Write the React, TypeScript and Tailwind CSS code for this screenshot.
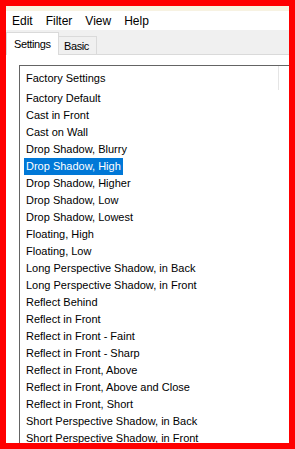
const items = [
  'Factory Default',
  'Cast in Front',
  'Cast on Wall',
  'Drop Shadow, Blurry',
  'Drop Shadow, High',
  'Drop Shadow, Higher',
  'Drop Shadow, Low',
  'Drop Shadow, Lowest',
  'Floating, High',
  'Floating, Low',
  'Long Perspective Shadow, in Back',
  'Long Perspective Shadow, in Front',
  'Reflect Behind',
  'Reflect in Front',
  'Reflect in Front - Faint',
  'Reflect in Front - Sharp',
  'Reflect in Front, Above',
  'Reflect in Front, Above and Close',
  'Reflect in Front, Short',
  'Short Perspective Shadow, in Back',
  'Short Perspective Shadow, in Front',
]

const selected = 'Drop Shadow, High'

export default function App() {
  return (
    <div className="w-[295px] h-[449px] bg-[#ff0000] p-[6px] font-['Liberation_Sans',Arial,sans-serif] text-black">
      <div className="w-full h-full bg-white flex flex-col overflow-hidden">
        <div className="h-[5px] bg-[#f7f2e2] shrink-0" />

        {/* menu bar */}
        <div className="h-[19px] shrink-0 flex items-center pl-[6px] gap-[13px] leading-none text-[12px]">
          <span>Edit</span>
          <span>Filter</span>
          <span>View</span>
          <span>Help</span>
        </div>

        {/* tabs */}
        <div className="h-[25px] shrink-0 bg-[#f0f0f0] flex items-end border-b border-[#dadada] text-[11px] tracking-[-0.4px]">
          <div className="h-[23px] w-[53px] bg-white border border-b-0 border-[#dadada] flex items-center pl-[7px] mb-[-1px]">
            Settings
          </div>
          <div className="h-[18px] w-[38px] bg-[#f0f0f0] border border-b-0 border-l-0 border-[#dadada] flex items-center pl-[5px] pt-[1px]">
            Basic
          </div>
        </div>

        {/* panel */}
        <div className="flex-1 pt-[10px] pl-[13px] min-h-0 text-[11px]">
          <div className="h-full border-l border-t border-[#646464] overflow-hidden">
            <div className="h-[24px] flex items-center">
              <div className="w-[259px] h-full flex items-center pl-[6px] border-r border-[#e5e5e5] shrink-0">
                Factory Settings
              </div>
            </div>
            <ul>
              {items.map((it) => (
                <li key={it} className="h-[17px] flex items-center pl-[4px]">
                  <span
                    className={
                      it === selected
                        ? 'h-full flex items-center px-[2px] bg-[#0078d7] text-white whitespace-nowrap'
                        : 'h-full flex items-center px-[2px] whitespace-nowrap'
                    }
                  >
                    {it}
                  </span>
                </li>
              ))}
            </ul>
          </div>
        </div>
      </div>
    </div>
  )
}
